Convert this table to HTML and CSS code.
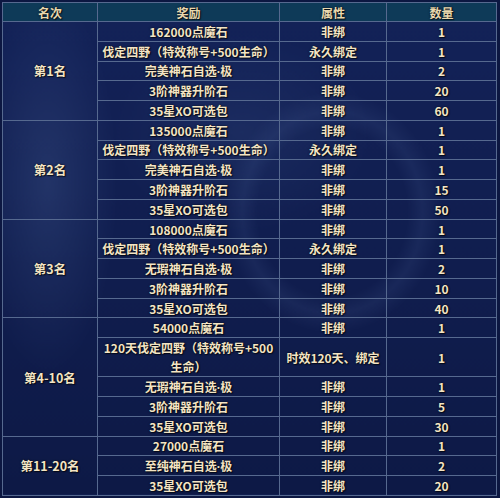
FILE: index.html
```html
<!DOCTYPE html>
<html lang="zh-CN">
<head>
<meta charset="utf-8">
<title>排名奖励</title>
<link rel="stylesheet" href="styles.css">
</head>
<body>
<div class="frame">
<table class="rewards">
  <colgroup>
    <col class="c-rank"><col class="c-item"><col class="c-attr"><col class="c-qty">
  </colgroup>
  <thead>
    <tr><th>名次</th><th>奖励</th><th>属性</th><th>数量</th></tr>
  </thead>
  <tbody>
    <tr><td rowspan="5" class="rank">第1名</td><td>162000点魔石</td><td>非绑</td><td>1</td></tr>
    <tr><td>伐定四野（特效称号+500生命）</td><td>永久绑定</td><td>1</td></tr>
    <tr><td>完美神石自选<span class="dot">·</span>极</td><td>非绑</td><td>2</td></tr>
    <tr><td>3阶神器升阶石</td><td>非绑</td><td>20</td></tr>
    <tr><td>35星XO可选包</td><td>非绑</td><td>60</td></tr>

    <tr><td rowspan="5" class="rank">第2名</td><td>135000点魔石</td><td>非绑</td><td>1</td></tr>
    <tr><td>伐定四野（特效称号+500生命）</td><td>永久绑定</td><td>1</td></tr>
    <tr><td>完美神石自选<span class="dot">·</span>极</td><td>非绑</td><td>1</td></tr>
    <tr><td>3阶神器升阶石</td><td>非绑</td><td>15</td></tr>
    <tr><td>35星XO可选包</td><td>非绑</td><td>50</td></tr>

    <tr><td rowspan="5" class="rank">第3名</td><td>108000点魔石</td><td>非绑</td><td>1</td></tr>
    <tr><td>伐定四野（特效称号+500生命）</td><td>永久绑定</td><td>1</td></tr>
    <tr><td>无瑕神石自选<span class="dot">·</span>极</td><td>非绑</td><td>2</td></tr>
    <tr><td>3阶神器升阶石</td><td>非绑</td><td>10</td></tr>
    <tr><td>35星XO可选包</td><td>非绑</td><td>40</td></tr>

    <tr><td rowspan="5" class="rank">第4-10名</td><td>54000点魔石</td><td>非绑</td><td>1</td></tr>
    <tr class="tall"><td class="wrap">120天伐定四野（特效称号+500生命）</td><td>时效120天、绑定</td><td>1</td></tr>
    <tr><td>无瑕神石自选<span class="dot">·</span>极</td><td>非绑</td><td>1</td></tr>
    <tr><td>3阶神器升阶石</td><td>非绑</td><td>5</td></tr>
    <tr><td>35星XO可选包</td><td>非绑</td><td>30</td></tr>

    <tr><td rowspan="3" class="rank">第11-20名</td><td>27000点魔石</td><td>非绑</td><td>1</td></tr>
    <tr><td>至纯神石自选<span class="dot">·</span>极</td><td>非绑</td><td>2</td></tr>
    <tr><td>35星XO可选包</td><td>非绑</td><td>20</td></tr>
  </tbody>
</table>
</div>
</body>
</html>
```

FILE: styles.css
```css
html, body {
  margin: 0;
  padding: 0;
}
body {
  background: #0c1741;
  width: 500px;
  height: 498px;
  overflow: hidden;
  font-family: "Noto Sans CJK SC", "Noto Sans", sans-serif;
}
.frame {
  padding: 2px 0 0 2px;
}
.rewards {
  width: 494px;
  border-collapse: collapse;
  table-layout: fixed;
  background-color: #0f1b4b;
  background-image:
    radial-gradient(ellipse 70px 190px at 45px 180px, rgba(70, 95, 150, 0.32), rgba(70, 95, 150, 0) 100%),
    radial-gradient(ellipse 125px 140px at 330px 210px, rgba(0, 0, 0, 0) 60%, rgba(80, 105, 160, 0.14) 72%, rgba(0, 0, 0, 0) 86%),
    radial-gradient(ellipse 130px 100px at 240px 130px, rgba(60, 85, 140, 0.22), rgba(60, 85, 140, 0) 100%),
    linear-gradient(180deg, #132258 0%, #101d4e 55%, #0d1946 100%);
}
.c-rank { width: 95px; }
.c-item { width: 182px; }
.c-attr { width: 107px; }
.c-qty { width: 110px; }

.rewards th,
.rewards td {
  border: 1px solid #56698f;
  padding: 0 2px;
  text-align: center;
  vertical-align: middle;
  font-size: 12px;
  font-weight: bold;
  line-height: 17px;
  white-space: nowrap;
  color: #f3e4c4;
  text-shadow: 0 0 2px rgba(0, 0, 0, 0.85), 1px 1px 1px rgba(0, 0, 0, 0.6);
}
.rewards thead tr {
  height: 19px;
}
.rewards th {
  background: #0e3a58;
  color: #e9d8ae;
}
.rewards tbody tr {
  height: 19.77px;
}
.rewards tbody tr.tall {
  height: 38px;
}
.rewards td.wrap {
  white-space: normal;
  line-height: 19px;
  padding: 0 4px;
}
.rewards td.rank {
  font-size: 12.5px;
}
.dot {
  font-family: "Noto Sans", sans-serif;
}
```
